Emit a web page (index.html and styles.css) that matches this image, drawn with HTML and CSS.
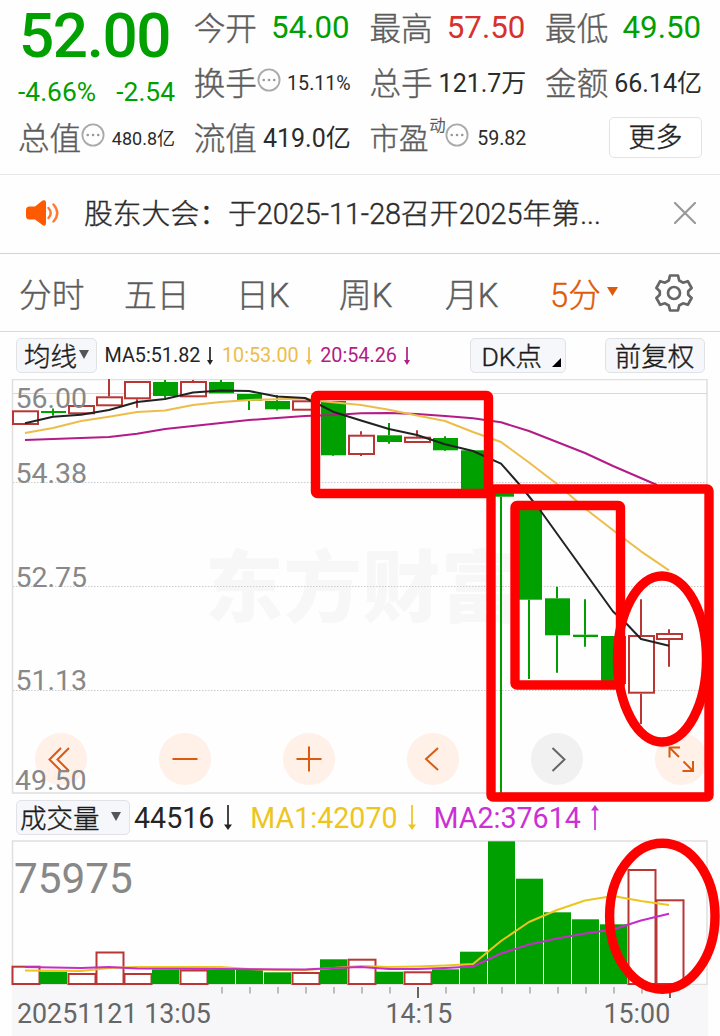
FILE: index.html
```html
<!DOCTYPE html>
<html lang="zh-CN">
<head>
<meta charset="utf-8">
<title>行情</title>
<link rel="stylesheet" href="styles.css">
</head>
<body>
<main class="app">
  <header class="quote">
    <section class="col">
      <div class="price">52.00</div>
      <div class="change"><span>-4.66%</span><span>-2.54</span></div>
      <div class="item"><span class="label">总值</span><svg class="more-dot" viewBox="0 0 24 24"><circle cx="12" cy="12" r="10.6"/><path d="M6.7 12h.1M12 12h.1M17.2 12h.1"/></svg><span class="value xs">480.8亿</span></div>
    </section>
    <section class="col">
      <div class="item"><span class="label">今开</span><span class="value lg down">54.00</span></div>
      <div class="item"><span class="label">换手</span><svg class="more-dot" viewBox="0 0 24 24"><circle cx="12" cy="12" r="10.6"/><path d="M6.7 12h.1M12 12h.1M17.2 12h.1"/></svg><span class="value sm">15.11%</span></div>
      <div class="item"><span class="label">流值</span><span class="value">419.0亿</span></div>
    </section>
    <section class="col">
      <div class="item"><span class="label">最高</span><span class="value lg up">57.50</span></div>
      <div class="item"><span class="label">总手</span><span class="value">121.7万</span></div>
      <div class="item"><span class="label tight">市盈</span><span class="sup">动</span><svg class="more-dot" viewBox="0 0 24 24"><circle cx="12" cy="12" r="10.6"/><path d="M6.7 12h.1M12 12h.1M17.2 12h.1"/></svg><span class="value sm">59.82</span></div>
    </section>
    <section class="col">
      <div class="item"><span class="label">最低</span><span class="value lg down">49.50</span></div>
      <div class="item"><span class="label">金额</span><span class="value">66.14亿</span></div>
      <div class="item end"><button class="more">更多</button></div>
    </section>
  </header>

  <section class="notice">
    <svg class="speaker" viewBox="0 0 34 28"><path class="horn" d="M3.5 7.5H9L16.5 1.6Q20 0 20 4V24Q20 28 16.500 26L9 20.500H3.500Q0 20.500 0 17V11Q0 7.500 3.500 7.500Z"/><path class="wave" d="M22.500 9Q27 14 22.500 19M27.500 5.500Q35 14 27.500 22.500"/></svg>
    <span class="notice-text">股东大会：于2025-11-28召开2025年第...</span>
    <svg class="close" viewBox="0 0 22 22"><path d="M1 1L21 21M21 1L1 21"/></svg>
  </section>

  <nav class="tabs">
    <span>分时</span><span>五日</span><span>日K</span><span>周K</span><span>月K</span>
    <span class="active">5分<svg class="caret" viewBox="0 0 11 9"><path d="M0 0H11L5.500 9Z"/></svg></span>
    <svg class="gear" viewBox="0 0 38 38"><path d="M15 1.500H23L24.200 6.500L28 8.700L32.800 7.200L36.600 14L33.200 17.300V20.700L36.600 24L32.800 30.800L28 29.300L24.200 31.500L23 36.500H15L13.800 31.500L10 29.300L5.200 30.800L1.400 24L4.800 20.700V17.300L1.400 14L5.200 7.200L10 8.700L13.800 6.500Z"/><circle cx="19" cy="19" r="6"/></svg>
  </nav>

  <section class="legend">
    <span class="pill ma">均线<svg class="tri" viewBox="0 0 10 9"><path d="M0 0H10L5 9Z"/></svg></span>
    <span class="ma-value black">MA5:51.82<svg class="arrow" viewBox="0 0 8 18"><path class="line" d="M4 0V15"/><path class="head" d="M1 13H7L4 18Z"/></svg></span>
    <span class="ma-value gold">10:53.00<svg class="arrow" viewBox="0 0 8 18"><path class="line" d="M4 0V15"/><path class="head" d="M1 13H7L4 18Z"/></svg></span>
    <span class="ma-value plum">20:54.26<svg class="arrow" viewBox="0 0 8 18"><path class="line" d="M4 0V15"/><path class="head" d="M1 13H7L4 18Z"/></svg></span>
    <span class="right-pills"><span class="pill dk">DK点<svg class="corner" viewBox="0 0 9 9"><path d="M9 0V9H0Z"/></svg></span><span class="pill fq">前复权</span></span>
  </section>

  <section class="charts">
    <svg class="kline" viewBox="0 379 720 416">
      <text class="mark" x="205" y="616" textLength="314">东方财富</text>
      <path class="frame" d="M12.500 793V379.500H707V793Z"/>
      <path class="rule" d="M12 393.500H707"/>
      <path class="dots" d="M13 482.500H707M13 586.500H707M13 690.500H707"/>
      <g id="candles"></g>
      <g class="axis-price">
        <text x="15.500" y="407.500">56.00</text><text x="15.500" y="482.700">54.38</text><text x="15.500" y="586.500">52.75</text><text x="15.500" y="690">51.13</text>
      </g>
      <polyline class="ma20" points="25,440 81,438 109,437 137,433.700 165,429 221,423 249,420 277,418 305,416 333,415 361,413.300 389,413 417,414 445,416 473,418.300 501,422.300 529,431 557,442 585,453 613,466 657,485"/>
      <polyline class="ma10" points="25,433 53,428 81,421 109,416.700 137,412 165,410.500 193,405 221,402 249,400 277,399.300 305,398.500 320,401 361,405 389,409.700 417,415.500 445,421 473,432 501,442 529,462.500 557,484 587,510 617,533.300 641,551.300 669,570.300"/>
      <polyline class="ma5" points="25,423.300 53,416.700 81,414.700 109,410 137,402 165,399 193,392.500 221,390.500 249,391 277,396.500 305,398 318,404 333,411.700 361,420.500 389,429 417,435 445,444.300 473,451 485,456.500 501,463.700 519,484 540,510 613,611.500 627,624.300 641,639 669,645.700"/>
    </svg>

    <div class="controls">
      <button><svg viewBox="0 0 52 52"><path d="M26 15L14.500 26.500L26 38M34 15L22.500 26.500L34 38"/></svg></button>
      <button><svg viewBox="0 0 52 52"><path d="M13.500 26H38.500"/></svg></button>
      <button><svg viewBox="0 0 52 52"><path d="M13.500 26H38.500M26 13.500V38.500"/></svg></button>
      <button><svg viewBox="0 0 52 52"><path d="M31 15L19 26L31 37"/></svg></button>
      <button class="gray"><svg viewBox="0 0 52 52"><path d="M21.500 15L33.500 26.500L21.500 38"/></svg></button>
      <button><svg viewBox="0 0 52 52"><path d="M14.500 24.500V14.500H25M14.500 14.500L24 24M38 28V38H27.500M28.500 28.500L38 38"/></svg></button>
    </div>
    <span class="low-price">49.50</span>

    <div class="volume-head">
      <span class="pill vol">成交量<svg class="tri" viewBox="0 0 10 9"><path d="M0 0H10L5 9Z"/></svg></span>
      <span class="vol-value black">44516<svg class="arrow big" viewBox="0 0 8 25"><path class="line" d="M4 0V22"/><path class="head" d="M0 19.500H8L4 25Z"/></svg></span>
      <span class="vol-value yellow">MA1:42070<svg class="arrow big" viewBox="0 0 8 25"><path class="line" d="M4 0V22"/><path class="head" d="M0 19.500H8L4 25Z"/></svg></span>
      <span class="vol-value violet">MA2:37614<svg class="arrow big" viewBox="0 0 8 25"><path class="line" d="M4 3V25"/><path class="head" d="M0 5.500H8L4 0Z"/></svg></span>
    </div>

    <svg class="volume" viewBox="0 840 720 196">
      <rect class="axis-bg" x="12" y="986" width="696" height="50"/>
      <path class="frame" d="M12.500 984.500V841H707V984.500Z"/>
      <text class="vol-max" x="14" y="893">75975</text>
      <g id="bars"></g>
      <polyline class="vma1" points="25,970.500 81,971 109,968 137,967 221,967 249,969 277,970 305,970 333,968 361,966 389,967 417,966.500 445,965.500 473,964 501,941 529,922 557,910 585,900.500 613,896 641,901 669,905"/>
      <polyline class="vma2" points="25,967 81,968 109,967 137,968.500 221,969 305,969.500 333,968 361,967 389,969 417,969 445,968 473,966.500 501,953.500 529,944.500 557,938.500 585,933.500 613,929.500 641,920.500 669,913.700"/>
      <g id="ticks"></g>
      <g class="axis-time">
        <text x="17" y="1023">20251121 13:05</text><text x="385.500" y="1023">14:15</text><text x="603.500" y="1023">15:00</text>
      </g>
    </svg>

    <svg class="notes" viewBox="0 379 720 657">
      <rect x="315.500" y="395.500" width="173" height="98" rx="2"/>
      <rect x="491" y="489" width="218" height="308" rx="2"/>
      <rect x="515" y="505.500" width="105.500" height="179.500" rx="2"/>
      <ellipse cx="662" cy="659" rx="44.500" ry="83"/>
      <ellipse cx="662.300" cy="916.200" rx="52.700" ry="73"/>
    </svg>
  </section>
</main>
<script src="chart.js"></script>
</body>
</html>
```
FILE: styles.css
```css
* { box-sizing: border-box; }
body { margin: 0; background: #fff; }
.app {
  width: 720px;
  height: 1036px;
  overflow: hidden;
  font-family: Roboto, "Noto Sans CJK SC", sans-serif;
  color: #2b2b2b;
  background: #fefefe;
}
svg { display: block; flex: none; }
span, button { white-space: nowrap; }

.quote {
  display: grid;
  grid-template-columns: repeat(4, 157px);
  column-gap: 18.700px;
  height: 175px;
  padding-left: 18px;
  border-bottom: 1px solid #e8e8e8;
}
.item { display: flex; align-items: center; height: 55px; }
.label { padding-top: 3px; font-size: 31.600px; line-height: 55px; font-weight: 300; color: #5c5c5c; }
.label, .sup, .more, .notice-text, .tabs, .pill { -webkit-text-stroke: 0.4px currentColor; }
.label.tight { font-size: 29.5px; }
.value { margin-left: auto; padding-top: 1px; font-size: 25px; line-height: 55px; font-weight: 400; }
.value.lg { padding: 0 1px 0 0; font-size: 31.3px; }
.value.sm { font-size: 19.6px; }
.value.xs { font-size: 18px; }
.up { color: #d7302e; }
.down, .price, .change { color: #00a000; }
.price { height: 73px; font-size: 62px; line-height: 72px; font-weight: 500; text-indent: 1px; letter-spacing: -1.4px; }
.change { display: flex; justify-content: space-between; height: 37px; font-size: 26.400px; line-height: 38px; }
.more-dot { width: 24px; height: 24px; margin-bottom: 5px; fill: none; stroke: #aaa; stroke-width: 1.8; }
.more-dot path { stroke: #999; stroke-width: 2.500; stroke-linecap: round; }
.sup { margin: 0 0 28px 1px; font-size: 16px; font-weight: 300; color: #555; }
.end { justify-content: flex-end; }
.more {
  width: 93px;
  height: 41px;
  padding: 0;
  border: 1.500px solid #e3e3e3;
  border-radius: 5px;
  background: #fff;
  font: 300 27px/36px Roboto, "Noto Sans CJK SC", sans-serif;
  color: #222;
}

.notice {
  display: flex;
  align-items: center;
  height: 79px;
  padding: 0 24px 2px 26px;
  border-bottom: 1px solid #d4d4d4;
}
.speaker { width: 34px; height: 28px; }
.horn { fill: #ff5a00; }
.wave { fill: none; stroke: #ff7a30; stroke-width: 2.400; stroke-linecap: round; }
.notice-text { margin-left: 24px; padding-bottom: 3px; font-size: 28.800px; font-weight: 300; }
.close { width: 22px; height: 22px; margin-left: auto; fill: none; stroke: #999; stroke-width: 2.200; stroke-linecap: round; }

.tabs {
  display: grid;
  grid-template-columns: 105px 112px 103px 106px 105px 105px 38px;
  align-items: center;
  height: 78px;
  padding-left: 19px;
  border-bottom: 1px solid #d8d8d8;
  font-size: 32.700px;
  font-weight: 300;
  color: #5c5c5c;
}
.tabs span { padding-bottom: 1px; }
.active { display: flex; align-items: center; gap: 6px; color: #de5a0b; }
.caret { width: 11px; height: 9px; margin-bottom: 1px; fill: #de5a0b; }
.gear { width: 38px; height: 38px; fill: none; stroke: #666; stroke-width: 2.700; stroke-linejoin: round; }

.legend { display: flex; align-items: center; height: 47px; padding: 0 15.500px 0 16px; }
.pill {
  display: flex;
  align-items: center;
  height: 35px;
  padding-bottom: 2px;
  border: 1px solid #e0e2e6;
  border-radius: 5px;
  background: #f6f7fa;
  font-size: 26.500px;
  font-weight: 300;
  color: #1b1b1b;
}
.tri { width: 10px; height: 9px; fill: #555; }
.pill.ma { width: 81px; padding-left: 7px; gap: 2px; }
.right-pills { display: flex; gap: 39px; margin-left: auto; }
.pill.dk { position: relative; width: 96px; padding-left: 11px; }
.corner { position: absolute; right: 4px; bottom: 5px; width: 9px; height: 9px; }
.pill.fq { width: 100px; justify-content: center; }
.ma-value { display: flex; align-items: center; gap: 6px; margin-left: 7.500px; font-size: 19.800px; }
.arrow { width: 8px; height: 18px; }
.line { fill: none; stroke: currentColor; stroke-width: 1.700; }
.head { fill: currentColor; }
.black { color: #252525; }
.gold { color: #edbd4b; }
.plum { color: #b31b86; }
.yellow { color: #edc51d; }
.violet { color: #cb30d3; }

.charts { position: relative; }
.kline { width: 720px; height: 416px; }
.mark { font: 900 78px "Noto Sans CJK SC", sans-serif; fill: #f7f7f7; }
.frame { fill: none; stroke: #e0e0e0; stroke-width: 1.500; }
.rule { stroke: #d8d8d8; stroke-width: 1; }
.dots { stroke: #ccc; stroke-width: 1; stroke-dasharray: 1.500 1.500; }
.axis-price text, .low-price { font-size: 28.500px; fill: #888; color: #888; }
.ma5, .ma10, .ma20, .vma1, .vma2 { fill: none; stroke-width: 2; stroke-linejoin: round; }
.ma5 { stroke: #222; }
.ma10 { stroke: #edbd4b; }
.ma20 { stroke: #b31b86; }
.vma1 { stroke: #edc51d; }
.vma2 { stroke: #c52dca; }
.solid { fill: #00a000; }
.hollow { fill: #fff; stroke: #b83634; stroke-width: 2; }
.wick-down { stroke: #00a000; stroke-width: 2; }
.wick-up { stroke: #b83634; stroke-width: 2; }

.controls { position: absolute; left: 35px; top: 354px; display: flex; gap: 72px; }
.controls button { width: 52px; height: 52px; padding: 0; border: 0; border-radius: 50%; background: #fff0e8; }
.controls svg { width: 52px; height: 52px; fill: none; stroke: #db5a10; stroke-width: 2; }
.controls .gray { background: #f1f1f1; }
.controls .gray svg { stroke: #666; }
.low-price { position: absolute; left: 15px; top: 386px; line-height: 32px; }

.volume-head { display: flex; align-items: center; height: 45px; padding-left: 16px; }
.pill.vol { width: 114px; padding-left: 3px; gap: 11px; }
.vol-value { display: flex; align-items: center; gap: 9px; font-size: 28.600px; }
.vol-value.black { margin-left: 4px; }
.vol-value.yellow, .vol-value.violet { margin-left: 17px; }
.arrow.big { width: 10px; height: 25px; }
.volume { width: 720px; height: 196px; }
.axis-bg { fill: #f7f7fa; }
.vol-max { font-size: 42.300px; fill: #888; }
.axis-time text { font-size: 26.800px; fill: #666; }
.tick { stroke: #aaa; stroke-width: 1.500; }
.tick.major { stroke: #666; stroke-width: 2; }
.notes { position: absolute; left: 0; top: 0; width: 720px; height: 657px; fill: none; stroke: #f00; stroke-width: 9.400; pointer-events: none; }
```
FILE: chart.js
```javascript
const STEP = 28;
const FIRST = 25;

// [direction, body top, body bottom, wick top, wick bottom]
const candles = [
  ['u', 410.3, 425, 410.3, 425], ['d', 411, 413, 408.5, 415.5], ['u', 405, 414.3, 405, 414.3],
  ['u', 396.3, 406.3, 379, 406.3], ['u', 381, 399.3, 381, 407.7], ['d', 382, 396, 380, 398.3],
  ['u', 381, 397.3, 380, 397.3], ['d', 382, 393.3, 380, 393.3], ['d', 394, 401, 394, 410],
  ['d', 401, 409.3, 395, 410.5], ['u', 400.3, 410.7, 400.3, 410.7], ['d', 401, 455.3, 401, 456],
  ['u', 434.7, 455, 431.3, 456], ['d', 435.3, 442, 423, 443.7], ['u', 436.7, 443, 430.3, 443],
  ['d', 438, 450.3, 436.3, 451], ['d', 450.3, 490, 450.3, 490], ['d', 490, 496.7, 490, 793],
  ['d', 505, 599.7, 505, 679], ['d', 598.3, 635.3, 586.7, 672.7], ['d', 634.7, 637, 599.3, 646.7],
  ['d', 636, 684, 636, 684], ['u', 635, 693.7, 599.3, 724], ['u', 633, 640, 629.3, 666.7]
];

// [direction, bar top]
const volumes = [
  ['u', 965.7], ['d', 971.7], ['u', 973], ['u', 951.5], ['u', 973], ['d', 969.5], ['u', 969.5], ['d', 970],
  ['d', 970], ['d', 972.3], ['u', 972], ['d', 959.3], ['u', 958.7], ['d', 971.7], ['u', 971.3], ['d', 969.3],
  ['d', 951.7], ['d', 841.3], ['d', 878.7], ['d', 912.3], ['d', 919.3], ['d', 924.3], ['u', 869], ['u', 899.3]
];

function add(parent, tag, cls, attrs) {
  const el = document.createElementNS('http://www.w3.org/2000/svg', tag);
  el.setAttribute('class', cls);
  for (const key in attrs) el.setAttribute(key, attrs[key]);
  parent.appendChild(el);
}

const candleLayer = document.getElementById('candles');
candles.forEach(([dir, top, bottom, high, low], i) => {
  const x = FIRST + STEP * i;
  const wick = dir === 'u' ? 'wick-up' : 'wick-down';
  if (high < top) add(candleLayer, 'line', wick, { x1: x, x2: x, y1: high, y2: top });
  if (low > bottom) add(candleLayer, 'line', wick, { x1: x, x2: x, y1: bottom, y2: low });
  if (dir === 'u') add(candleLayer, 'rect', 'hollow', { x: x - 12, y: top + 1, width: 25, height: bottom - top - 2 });
  else add(candleLayer, 'rect', 'solid', { x: x - 12, y: top, width: 25, height: bottom - top });
});

const barLayer = document.getElementById('bars');
volumes.forEach(([dir, top], i) => {
  const x = FIRST + STEP * i;
  if (dir === 'u') add(barLayer, 'rect', 'hollow', { x: x - 12.5, y: top + 1, width: 27, height: 983 - top });
  else add(barLayer, 'rect', 'solid', { x: x - 13, y: top, width: 27, height: 984 - top });
});

const tickLayer = document.getElementById('ticks');
for (let x = 222; x <= 670; x += STEP) {
  const major = x === 418 || x === 670;
  add(tickLayer, 'line', major ? 'tick major' : 'tick', { x1: x, x2: x, y1: 987, y2: major ? 998 : 993.5 });
}
```
